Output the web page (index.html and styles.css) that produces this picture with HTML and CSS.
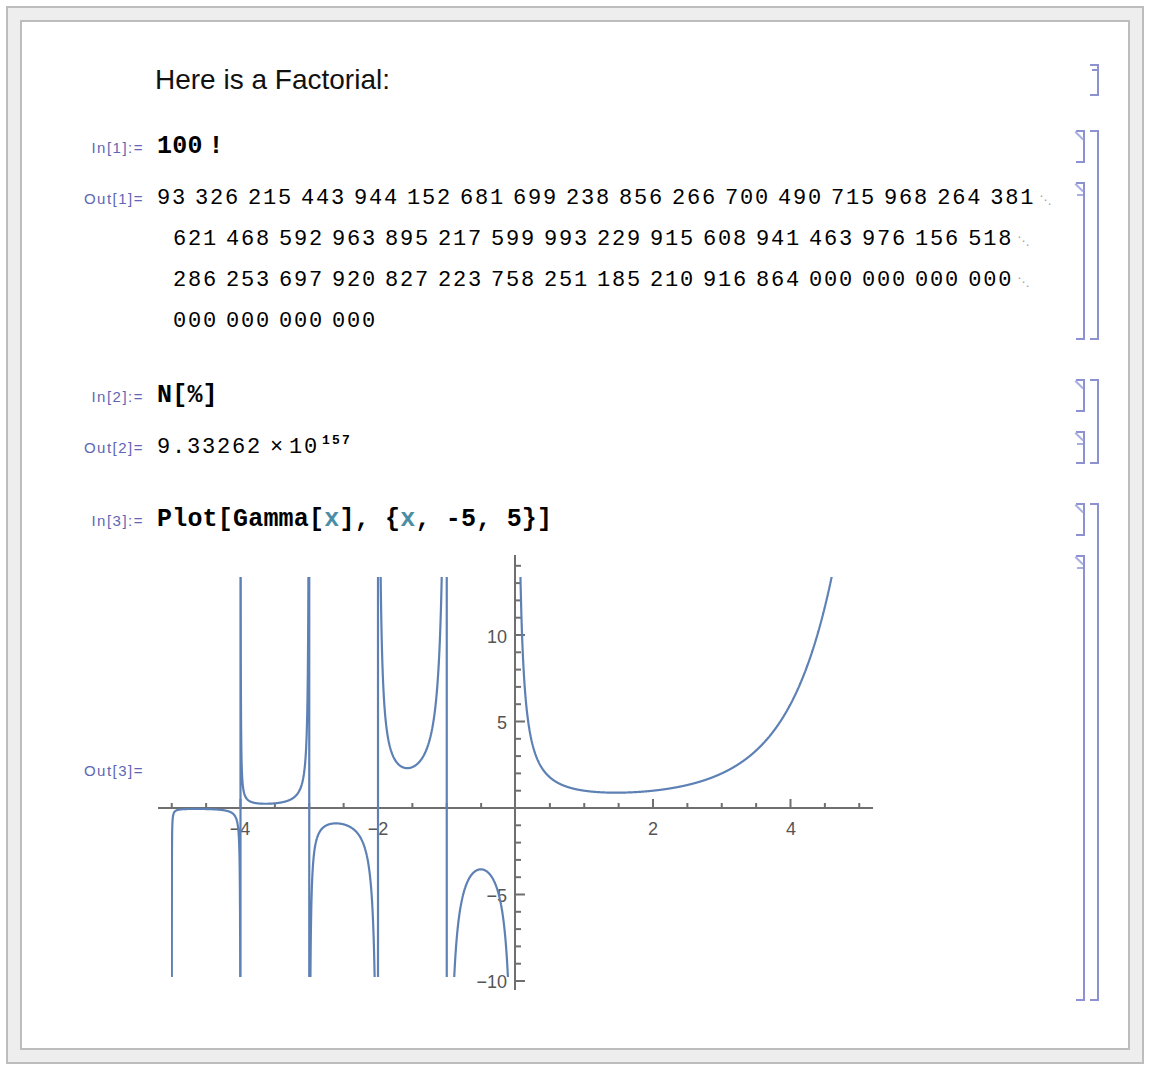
FILE: index.html
```html
<!DOCTYPE html>
<html lang="en">
<head>
    <meta charset="UTF-8">
    <title>Untitled-1 - Notebook</title>
    <link rel="stylesheet" href="styles.css">
</head>
<body>
    <div class="frame">
        <div class="notebook">

            <!-- Text cell -->
            <div class="group text-group">
                <div class="cells">
                    <div class="cell">
                        <div class="label"></div>
                        <div class="content text-cell">Here is a Factorial:</div>
                    </div>
                </div>
                <div class="bracket outer text-bracket"></div>
            </div>

            <!-- 100! -->
            <div class="group">
                <div class="cells">
                    <div class="cell">
                        <div class="label">In[1]:=</div>
                        <div class="content code">100<span class="bang">!</span></div>
                        <div class="bracket inner in"></div>
                    </div>
                    <div class="cell">
                        <div class="label">Out[1]=</div>
                        <div class="content number">
                            <div class="lines">
                                <div class="line">93 326 215 443 944 152 681 699 238 856 266 700 490 715 968 264 381<span class="cont">⋱</span></div>
                                <div class="line wrap">621 468 592 963 895 217 599 993 229 915 608 941 463 976 156 518<span class="cont">⋱</span></div>
                                <div class="line wrap">286 253 697 920 827 223 758 251 185 210 916 864 000 000 000 000<span class="cont">⋱</span></div>
                                <div class="line wrap">000 000 000 000</div>
                            </div>
                        </div>
                        <div class="bracket inner out"></div>
                    </div>
                </div>
                <div class="bracket outer"></div>
            </div>

            <!-- N[%] -->
            <div class="group">
                <div class="cells">
                    <div class="cell">
                        <div class="label">In[2]:=</div>
                        <div class="content code">N[%]</div>
                        <div class="bracket inner in"></div>
                    </div>
                    <div class="cell">
                        <div class="label">Out[2]=</div>
                        <div class="content number single">9.33262<span class="times">×</span>10<span class="sup">157</span></div>
                        <div class="bracket inner out"></div>
                    </div>
                </div>
                <div class="bracket outer"></div>
            </div>

            <!-- Plot -->
            <div class="group">
                <div class="cells">
                    <div class="cell">
                        <div class="label">In[3]:=</div>
                        <div class="content code">Plot[Gamma[<span class="var">x</span>], {<span class="var">x</span>, -5, 5}]</div>
                        <div class="bracket inner in"></div>
                    </div>
                    <div class="cell plot-cell">
                        <div class="label">Out[3]=</div>
                        <div class="content">
                            <svg class="plot" id="plot" width="720" height="446" viewBox="0 0 720 446">
                                <defs>
                                    <clipPath id="plot-clip">
                                        <rect x="14" y="22" width="690" height="400"></rect>
                                    </clipPath>
                                </defs>
                                <g class="axes" id="axes">
                                    <line x1="1" y1="253" x2="716" y2="253"></line>
                                    <line x1="358" y1="0" x2="358" y2="435"></line>
                                </g>
                                <g class="tick-labels">
                                    <text x="350" y="88" text-anchor="end">10</text>
                                    <text x="350" y="174" text-anchor="end">5</text>
                                    <text x="350" y="347" text-anchor="end">−5</text>
                                    <text x="350" y="433" text-anchor="end">−10</text>
                                    <text x="83" y="280" text-anchor="middle">−4</text>
                                    <text x="221" y="280" text-anchor="middle">−2</text>
                                    <text x="496" y="280" text-anchor="middle">2</text>
                                    <text x="634" y="280" text-anchor="middle">4</text>
                                </g>
                                <g class="curve-layer" clip-path="url(#plot-clip)">
                                    <path class="curve" id="curve" d=""></path>
                                </g>
                            </svg>
                        </div>
                        <div class="bracket inner out"></div>
                    </div>
                </div>
                <div class="bracket outer"></div>
            </div>

        </div>
    </div>

    <script>
        // Plot mapping: origin and scale in svg coords
        const OX = 358.5, OY = 253, SX = 68.75, SY = 17.3;
        const px = x => OX + x * SX;
        const py = y => OY - y * SY;

        // Lanczos approximation with reflection for x < 0.5
        function gamma(x) {
            if (x < 0.5) return Math.PI / (Math.sin(Math.PI * x) * gamma(1 - x));
            x -= 1;
            const c = [0.99999999999980993, 676.5203681218851, -1259.1392167224028,
                771.32342877765313, -176.61502916214059, 12.507343278686905,
                -0.13857109526572012, 9.9843695780195716e-6, 1.5056327351493116e-7];
            let a = c[0];
            const t = x + 7.5;
            for (let i = 1; i < 9; i++) a += c[i] / (x + i);
            return Math.sqrt(2 * Math.PI) * Math.pow(t, x + 0.5) * Math.exp(-t) * a;
        }

        function buildCurve() {
            const branches = [[-5, -4], [-4, -3], [-3, -2], [-2, -1], [-1, 0], [0, 5]];
            const eps = 1e-5;
            let d = '';
            branches.forEach(([a, b]) => {
                const n = Math.round((b - a) * 1000);
                for (let i = 0; i <= n; i++) {
                    const x = a + eps + (b - a - 2 * eps) * i / n;
                    let y = gamma(x);
                    y = Math.max(-20, Math.min(25, y));
                    d += (i === 0 ? 'M' : 'L') + px(x).toFixed(2) + ' ' + py(y).toFixed(2);
                }
            });
            // the plot joins the branches across each pole with a vertical stroke
            for (let k = -4; k <= -1; k++) {
                d += 'M' + px(k).toFixed(2) + ' 10L' + px(k).toFixed(2) + ' 440';
            }
            document.getElementById('curve').setAttribute('d', d);
        }

        function buildTicks() {
            const axes = document.getElementById('axes');
            const ns = 'http://www.w3.org/2000/svg';
            const addLine = (x1, y1, x2, y2) => {
                const l = document.createElementNS(ns, 'line');
                l.setAttribute('x1', x1); l.setAttribute('y1', y1);
                l.setAttribute('x2', x2); l.setAttribute('y2', y2);
                axes.appendChild(l);
            };
            // x ticks every 0.5, major at even integers
            for (let k = -10; k <= 10; k++) {
                if (k === 0) continue;
                const len = k % 4 === 0 ? 9 : 5;
                addLine(px(k / 2), OY, px(k / 2), OY - len);
            }
            // y ticks every 1, major at multiples of 5
            for (let v = -10; v <= 14; v++) {
                if (v === 0) continue;
                const len = v % 5 === 0 ? 10 : 6;
                addLine(358, py(v), 358 + len, py(v));
            }
        }

        buildTicks();
        buildCurve();
    </script>
</body>
</html>
```

FILE: styles.css
```css
html, body {
    margin: 0;
    background: #fff;
}
.frame {
    margin: 6px;
    width: 1110px;
    padding: 12px;
    border: 2px solid #bdbdbd;
    background: #eeeeee;
}
.notebook {
    box-sizing: border-box;
    height: 1030px;
    padding: 42px 29px 0 0;
    border: 2px solid #bdbdbd;
    background: #fff;
}

/* groups and cells */
.group {
    display: flex;
    margin-bottom: 39px;
}
.group.text-group {
    margin-bottom: 34px;
}
.cells {
    flex: 1;
    display: flex;
    flex-direction: column;
    gap: 19px;
}
.cell {
    display: flex;
    align-items: baseline;
}
.label {
    width: 122px;
    margin-right: 13px;
    flex-shrink: 0;
    text-align: right;
    font-family: "Liberation Sans", Arial, sans-serif;
    font-size: 15px;
    letter-spacing: 1.5px;
    color: #5f66b6;
}
.content {
    flex: 1;
    min-width: 0;
}

/* brackets */
.bracket {
    position: relative;
    width: 7px;
    flex-shrink: 0;
    align-self: stretch;
    border: 2px solid #8c91d2;
    border-left: 0;
}
.bracket.outer {
    margin-left: 5px;
}
.bracket.in::before,
.bracket.out::before {
    content: "";
    position: absolute;
    top: -1px;
    left: 0;
    width: 11px;
    height: 2px;
    background: #a9aee0;
    transform: rotate(45deg);
    transform-origin: 0 0;
}
.bracket.out::after {
    content: "";
    position: absolute;
    top: 10px;
    right: 0;
    width: 6px;
    height: 2px;
    background: #a9aee0;
}
.text-bracket::before {
    content: "";
    position: absolute;
    top: 3px;
    right: 0;
    width: 5px;
    height: 2px;
    background: #8c91d2;
}

/* text */
.text-cell {
    margin-left: -2px;
    font-family: "Liberation Sans", Arial, sans-serif;
    font-size: 28px;
    line-height: 32px;
    color: #111;
}
.code {
    font-family: "Liberation Mono", "Courier New", monospace;
    font-weight: bold;
    font-size: 25px;
    letter-spacing: 0.2px;
    line-height: 33px;
    color: #000;
}
.code .bang {
    margin-left: 6px;
}
.code .var {
    color: #4a8ea6;
}
.number {
    font-family: "Liberation Mono", "Courier New", monospace;
    font-size: 22px;
    letter-spacing: 1.8px;
    word-spacing: -7px;
    color: #000;
}
.number .lines {
    margin: -3px 0 -2px;
    line-height: 40px;
}
.number .line.wrap {
    padding-left: 16px;
}
.number.single {
    line-height: 33px;
}
.cont {
    margin-left: 4px;
    font-family: "DejaVu Sans", sans-serif;
    font-size: 12px;
    letter-spacing: 0;
    color: #a09a94;
}
.times {
    margin: 0 4px 0 8px;
}
.sup {
    margin-left: 3px;
    font-size: 13px;
    font-weight: bold;
    letter-spacing: 2.2px;
    line-height: 0;
    vertical-align: 9px;
}

/* plot */
.plot-cell {
    align-items: center;
}
.plot-cell .label {
    margin-bottom: 16px;
}
.plot {
    display: block;
}
.plot .axes line {
    stroke: #6f6f6f;
    stroke-width: 2;
}
.plot .tick-labels text {
    font-family: "Liberation Sans", Arial, sans-serif;
    font-size: 18px;
    fill: #555;
}
.plot .curve {
    fill: none;
    stroke: #5e81b5;
    stroke-width: 2.2;
    stroke-linejoin: round;
}
```
